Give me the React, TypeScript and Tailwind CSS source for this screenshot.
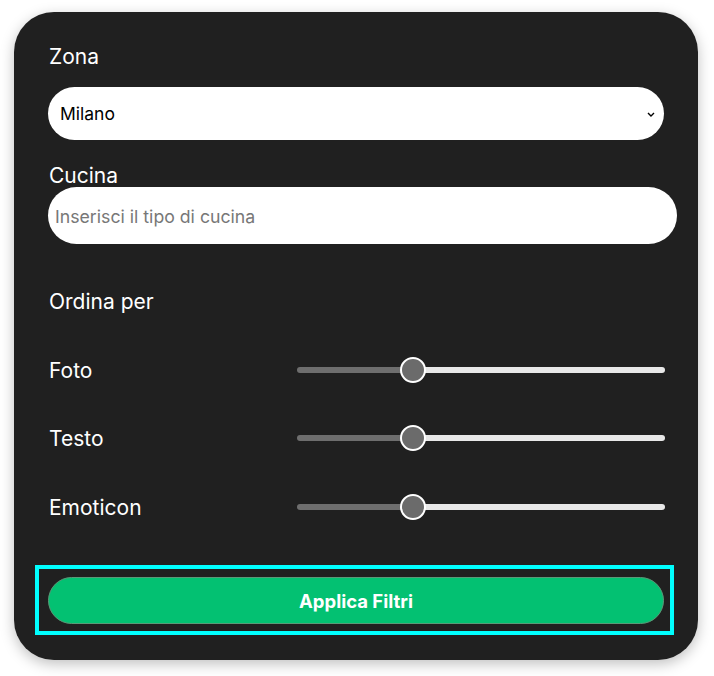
const font = { fontFamily: "Inter, 'Noto Sans', sans-serif" };

const labelClass = "text-[21px] leading-[22px] pt-[2px] text-white pl-[1px]";

const SliderRow: React.FC<{ label: string; className?: string }> = ({ label, className }) => (
  <div className={"flex items-center h-[26px] " + (className ?? "")}>
    <span className={"w-[249px] " + labelClass}>{label}</span>
    <div className="relative w-[368px] h-[26px] flex items-center">
      <div className="flex w-full h-[6px] rounded-full overflow-hidden">
        <div className="w-[116px] bg-[#6e6e6e]" />
        <div className="flex-1 bg-[#e8e8e8]" />
      </div>
      <div className="absolute left-[103px] top-0 w-[26px] h-[26px] rounded-full bg-[#6b6b6b] border-2 border-white" />
    </div>
  </div>
);

export default function App() {
  return (
    <div className="bg-white w-[714px] h-[676px] pt-[12px] pl-[14px]" style={font}>
      <div className="w-[684px] h-[648px] rounded-[40px] bg-[#202020] shadow-[0_4px_14px_rgba(0,0,0,0.25)] pt-[32px] pl-[34px]">
        <div className={labelClass}>Zona</div>

        <div className="mt-[19px] w-[616px] h-[53px] rounded-full bg-white flex items-center pl-[12px] pr-[8px] pt-[2px]">
          <span className="flex-1 text-[17.5px] text-black">Milano</span>
          <svg width="8" height="5" viewBox="0 0 8 5" className="mr-[1px]">
            <path d="M1 1l3 3 3-3" fill="none" stroke="#000" strokeWidth="1.4" />
          </svg>
        </div>

        <div className={"mt-[23px] " + labelClass}>Cucina</div>

        <div className="w-[629px] h-[57px] rounded-full bg-white flex items-center pl-[7px] pt-[3px]">
          <span className="text-[17.7px] text-[#777777]">Inserisci il tipo di cucina</span>
        </div>

        <div className={"mt-[45px] " + labelClass}>Ordina per</div>

        <SliderRow label="Foto" className="mt-[44px]" />
        <SliderRow label="Testo" className="mt-[42px]" />
        <SliderRow label="Emoticon" className="mt-[43px]" />

        <div className="mt-[45px] -ml-[13px] w-[639px] h-[70px] border-[4px] border-[#00ffff] pt-[8px] pl-[9px]">
          <button className="w-[616px] h-[47px] rounded-full bg-[#03c172] border border-[#5a9a78] text-white font-bold text-[18.5px] pt-[2px]">
            Applica Filtri
          </button>
        </div>
      </div>
    </div>
  );
}
